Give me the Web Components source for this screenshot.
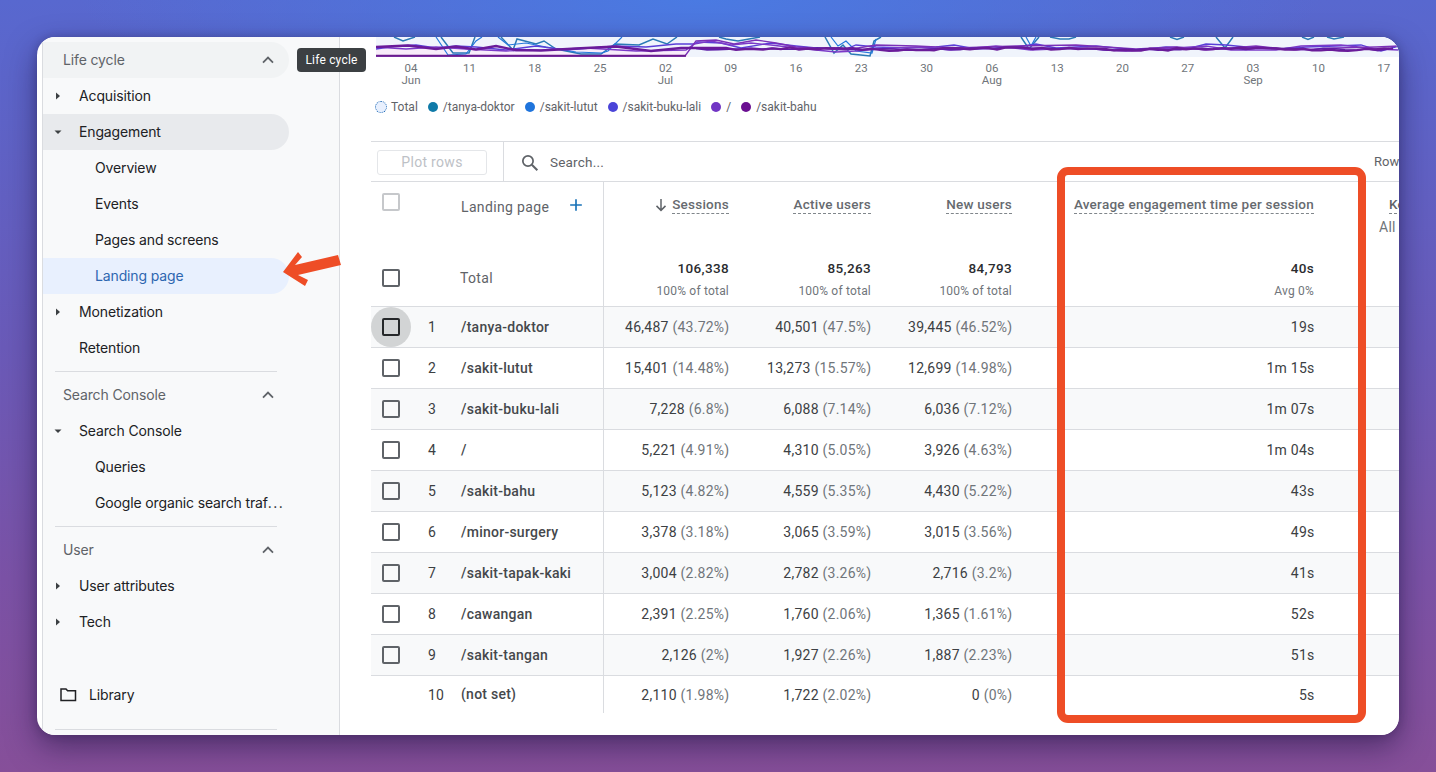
<!DOCTYPE html>
<html><head><meta charset="utf-8">
<style>
html,body{margin:0;height:100%}
body{width:1436px;height:772px;overflow:hidden;background:radial-gradient(ellipse 620px 130px at 700px 0,#4a7ae2 0%,rgba(74,122,226,0) 100%),linear-gradient(180deg,#5868cf 0%,#6a5ab8 45%,#7b52a6 75%,#864f99 100%);font-family:"Inter","Liberation Sans",sans-serif;display:flex;padding:37px;box-sizing:border-box}
</style></head><body>
<ga-window>
 <ga-sidebar slot="side">
  <ga-nav kind="head" label="Life cycle" hov></ga-nav>
  <ga-nav kind="closed" label="Acquisition"></ga-nav>
  <ga-nav kind="open" label="Engagement" sel></ga-nav>
  <ga-nav kind="sub" label="Overview"></ga-nav>
  <ga-nav kind="sub" label="Events"></ga-nav>
  <ga-nav kind="sub" label="Pages and screens"></ga-nav>
  <ga-nav kind="sub" label="Landing page" act></ga-nav>
  <ga-nav kind="closed" label="Monetization"></ga-nav>
  <ga-nav kind="plain" label="Retention"></ga-nav>
  <ga-sep></ga-sep>
  <ga-nav kind="head" label="Search Console"></ga-nav>
  <ga-nav kind="open" label="Search Console"></ga-nav>
  <ga-nav kind="sub" label="Queries"></ga-nav>
  <ga-nav kind="sub" label="Google organic search traf..." wide></ga-nav>
  <ga-sep></ga-sep>
  <ga-nav kind="head" label="User"></ga-nav>
  <ga-nav kind="closed" label="User attributes"></ga-nav>
  <ga-nav kind="closed" label="Tech"></ga-nav>
  <ga-nav kind="lib" label="Library"></ga-nav>
  <ga-sep last></ga-sep>
 </ga-sidebar>
 <ga-main slot="main">
  <ga-chart></ga-chart>
  <ga-legend></ga-legend>
  <ga-toolbar></ga-toolbar>
  <ga-table></ga-table>
 </ga-main>
 <ga-overlay slot="over"></ga-overlay>
</ga-window>
<script>
const ICON={
 up:'<svg width="24" height="24" viewBox="0 0 24 24"><path d="M7 14.6 12 9.6l5 5" fill="none" stroke="#5f6368" stroke-width="1.8"/></svg>',
 right:'<svg width="24" height="24" viewBox="0 0 24 24"><path d="M10 8.5v7l4-3.500z" fill="#3c4043"/></svg>',
 down:'<svg width="24" height="24" viewBox="0 0 24 24"><path d="M8.5 10.5h7L12 14z" fill="#3c4043"/></svg>',
 folder:'<svg width="20" height="20" viewBox="0 0 20 20"><path d="M3 4h5l1.600 1.800H17.500v9.700H3z" fill="none" stroke="#202124" stroke-width="1.500"/></svg>'
};
customElements.define('ga-window',class extends HTMLElement{constructor(){super();this.attachShadow({mode:'open'}).innerHTML=`<style>
:host{display:flex;position:relative;width:1362px;height:698px;border-radius:18px;background:#fff;box-shadow:0 12px 30px rgba(25,15,60,.5),0 0 8px rgba(25,15,60,.25);overflow:hidden;flex:none}
.clip{display:flex;width:100%;height:100%;overflow:hidden;border-radius:18px}
</style><div class="clip"><slot name="side"></slot><slot name="main"></slot><slot name="over"></slot></div>`}});
customElements.define('ga-sidebar',class extends HTMLElement{constructor(){super();this.attachShadow({mode:'open'}).innerHTML=`<style>
:host{display:block;flex:none;width:298px;height:698px;margin-left:5px;padding-top:5px;box-sizing:border-box;background:#f8f9fa;border-left:1px solid #dadce0;border-right:1px solid #dadce0;overflow:hidden}
</style><slot></slot>`}});
customElements.define('ga-nav',class extends HTMLElement{constructor(){super();
 const k=this.getAttribute('kind');let l=this.getAttribute('label');
 if(this.hasAttribute('wide'))l=l.replace('...','<span style="letter-spacing:1.4px">...</span>');
 const bg=this.hasAttribute('sel')?'#e8eaed':this.hasAttribute('act')?'#e8f0fe':this.hasAttribute('hov')?'#f1f3f4':'transparent';
 const col=k=='head'?'#5f6368':this.hasAttribute('act')?'#2d66b0':'#202124';
 const pad={head:20,closed:36,open:36,plain:36,sub:52,lib:46}[k];
 const ic=(k=='closed'?ICON.right:k=='open'?ICON.down:'');
 this.attachShadow({mode:'open'}).innerHTML=`<style>
 :host{display:block;height:36px;width:246px;position:relative;box-sizing:border-box;border-radius:0 18px 18px 0;background:${bg};${k=='lib'?'margin-top:37px;margin-bottom:16px;':''}}
 .t{position:relative;display:block;padding-left:${pad}px;font:400 14px/36px "Inter","Liberation Sans",sans-serif;letter-spacing:-.01em;color:${col};white-space:nowrap}
 .i{position:absolute;left:3px;top:6px;line-height:0}
 .c{position:absolute;left:213px;top:6px;line-height:0}
 .f{position:absolute;left:15px;top:8px;line-height:0}
 </style>${ic?`<span class="i">${ic}</span>`:''}${k=='head'?`<span class="c">${ICON.up}</span>`:''}${k=='lib'?`<span class="f">${ICON.folder}</span>`:''}<span class="t">${l}</span>`}});
customElements.define('ga-sep',class extends HTMLElement{constructor(){super();const last=this.hasAttribute('last');this.attachShadow({mode:'open'}).innerHTML=`<style>
:host{display:block;height:1px;width:222px;margin:${last?'0':'5px'} 0 5px 12px;background:#dadce0}
</style>`}});
customElements.define('ga-main',class extends HTMLElement{constructor(){super();this.attachShadow({mode:'open'}).innerHTML=`<style>
:host{display:block;flex:1;min-width:0;position:relative;font-family:Roboto,"Liberation Sans",sans-serif;overflow:hidden;background:#fff;padding-left:31px}
</style><slot></slot>`}});
function wob(seed,base,amp,step,from,to){let s=seed,p=[];for(let x=from;x<=to;x+=step){s=(s*9301+49297)%233280;p.push(x+','+(base+(s/233280-.5)*amp+Math.sin(x/37)*amp*.25).toFixed(1))}return p.join(' ')}
customElements.define('ga-chart',class extends HTMLElement{constructor(){super();
 const ticks=[['04','Jun',35],['11',0,93.5],['18',0,158.8],['25',0,224.1],['02','Jul',289.400],['09',0,354.700],['16',0,420],['23',0,485.300],['30',0,550.600],['06','Aug',615.900],['13',0,681.200],['20',0,746.500],['27',0,811.800],['03','Sep',877.100],['10',0,942.400],['17',0,1007.700]];
 const B=[
 "18,0 27,4 39,0","65,0 77,16 93,16 99,0",
 "125,0 137,13 141,2 160,7 168,4 180,12 205,17 225,17 239,7 263,8 277,2 291,7 301,0",
 "343,0 350,2 362,4 384,0","449,0 458,16 467,8 475,17 494,19 498,4 505,0",
 "645,0 653,12 663,0","674,0 684,2 693,2 700,0","794,0 801,2.500 808,0","840,0 849,11 857,0","926,0 932,2.500 938,0","951,0 958,2 968,0"];
 const B2=["60,0 72,18 90,17 100,4 106,0","122,0 132,8 150,6 170,10 200,15 226,16 232,14 246,0","455,0 462,9 470,4 480,14 496,16 500,2","650,0 655,9 660,0"];
 const L1="0,12 20,9 40,8 60,11 80,9 100,10 130,13 160,9 190,13 240,9 270,10 300,7 318,7 322,5 345,6 365,11 395,6 420,9 440,11 470,12 480,8 500,10 530,11 560,10 578,8 600,12 640,10 660,7 680,11 720,9 760,13 790,10 815,11 830,7 850,8 880,11 905,12 930,10 960,9 985,8 1005,14 1023,9";
 const L2="0,10 30,12 60,10 90,12 130,14 170,13 210,11 260,14 310,13 318,7 335,4 355,8 375,6 395,8 420,11 460,15 480,14 500,12 540,10 575,13 620,9 655,13 700,11 750,14 800,11 830,9 855,13 900,13 925,9 965,8 1000,12 1023,13";
 const L3="0,19 309,19 320,4 340,3 358,7 380,3 400,6 420,10 470,13 500,8 540,9 580,11 640,9 700,8 760,12 800,10 830,13 880,9 920,13 960,11 1000,10 1023,9";
 this.attachShadow({mode:'open'}).innerHTML=`<style>
 :host{display:block;width:1023px;margin-left:5px;height:63px;position:relative}
 svg{display:block}
 .x{display:block;position:relative;height:32px;font:11.5px/12px Roboto,"Liberation Sans",sans-serif;color:#70757a}
 .x span{position:absolute;top:5px;transform:translateX(-50%);text-align:center;line-height:12px}
 </style><svg width="1023" height="20" viewBox="0 0 1023 20">
 <rect width="1023" height="20" fill="#f0f4fc"/><rect y="12" width="312" height="8" fill="#f8ecfa"/>
 ${B.map(p=>`<polyline points="${p}" fill="none" stroke="#2a7ab5" stroke-width="1.500"/>`).join('')}
 ${B2.map(p=>`<polyline points="${p}" fill="none" stroke="#2478dc" stroke-width="1.200"/>`).join('')}
 <polyline points="${L1}" fill="none" stroke="#5a3fd8" stroke-width="1.300"/>
 <polyline points="${L2}" fill="none" stroke="#7b3ac8" stroke-width="1.300"/>
 <polyline points="${L3}" fill="none" stroke="#7a30b8" stroke-width="1.300"/>
 <polyline points="0,18.700 310,18.700" fill="none" stroke="#6a1b8f" stroke-width="2"/>
 <polyline points="${wob(97,12,2.200,11,320,1023)}" fill="none" stroke="#5e1fa8" stroke-width="1.600"/>
 <polyline points="0,10 32,8.500 60,12 80,9.500 100,12.500 120,9 140,13 165,13.500 200,11.500 240,9.500 275,14 305,11 350,11 ${wob(43,12,2.600,9,360,1023)}" fill="none" stroke="#6a1b9a" stroke-width="2.300"/>
 </svg><div class="x">${ticks.map(t=>`<span style="left:${t[2]}px">${t[0]}${t[1]?'<br>'+t[1]:''}</span>`).join('')}</div>`}});
customElements.define('ga-legend',class extends HTMLElement{constructor(){super();
 const it=[['#0f7aa8','/tanya-doktor'],['#1f74dc','/sakit-lutut'],['#4a44d8','/sakit-buku-lali'],['#7135c4','/'],['#6a0f91','/sakit-bahu']];
 this.attachShadow({mode:'open'}).innerHTML=`<style>
 :host{display:flex;align-items:center;height:14px;margin:0 0 0 4px;font:12px/14px Roboto,"Liberation Sans",sans-serif;color:#5f6368}
 i{display:block;width:10px;height:10px;border-radius:50%;margin-right:5px;flex:none}
 i.t{box-sizing:border-box;width:12px;height:12px;background:#e8f0fe;border:1.200px dotted #1967b4;margin-right:4px}
 span{margin-right:10px}
 </style><i class="t"></i><span>Total</span>${it.map(a=>`<i style="background:${a[0]}"></i><span>${a[1]}</span>`).join('')}`}});
customElements.define('ga-toolbar',class extends HTMLElement{constructor(){super();
 this.attachShadow({mode:'open'}).innerHTML=`<style>
 :host{display:flex;align-items:center;height:39px;margin-top:27px;border-top:1px solid #dadce0;border-bottom:1px solid #dadce0;font:14px/39px Roboto,"Liberation Sans",sans-serif;color:#5f6368;width:1028px;white-space:nowrap}
 .b{padding:0 6px;display:flex;height:39px;align-items:center;border-right:1px solid #dadce0;width:120px;flex:none}
 .p{box-sizing:border-box;width:110px;height:25px;margin-top:2px;border:1px solid #e4e6e9;border-radius:3px;color:#bdc1c6;text-align:center;font-size:14px;line-height:23px;letter-spacing:.3px}
 svg{margin:2px 9px 0 15px;flex:none}
 .s{letter-spacing:.2px;font-size:13.500px;margin-top:1px}
 .r{margin-left:auto;font-size:13px;width:25px;overflow:visible}
 </style><div class="b"><div class="p">Plot rows</div></div>
 <svg width="22" height="22" viewBox="0 0 24 24"><circle cx="9.800" cy="9.800" r="5.600" fill="none" stroke="#5f6368" stroke-width="1.900"/><path d="M14 14l6 6" stroke="#5f6368" stroke-width="2.200" fill="none"/></svg>
 <span class="s">Search...</span><span class="r">Rows</span>`}});
customElements.define('ga-row',class extends HTMLElement{connectedCallback(){
 const d=JSON.parse(this.getAttribute('d'));
 const n=d.n;
 const cell=c=>{const m=c.match(/^(.*?)( \(.*\))?$/);return `<div class="m">${m[1]}${m[2]?`<span class="g">${m[2]}</span>`:''}</div>`};
 (this.shadowRoot||this.attachShadow({mode:'open'})).innerHTML=`<style>
 :host{display:grid;grid-template-columns:40px 40px 153px 137px 142px 141px 302px 73px;height:${n==10?37:41}px;align-items:center;background:${n%2?'#f8f9fa':'#fff'};${n==10?'':'border-bottom:1px solid #dadce0;'}box-sizing:border-box;font:14px/20px Roboto,"Liberation Sans",sans-serif;color:#3c4043;letter-spacing:.25px}
 .cb{box-sizing:border-box;width:18px;height:18px;border:2px solid #5f6368;border-radius:2px;margin-left:11px;position:relative;${n==1?'border-color:#202124;':''}}
 .cb.h::before{content:"";position:absolute;left:-13px;top:-13px;width:40px;height:40px;border-radius:50%;background:rgba(60,64,67,.2)}
 .n{padding-left:17px}
 .na{padding-left:10px;font-weight:500;height:100%;line-height:${n==10?37:40}px;border-right:1px solid #dadce0;box-sizing:border-box;white-space:nowrap;color:#45484c}
 .m{text-align:right;padding-right:11.500px;white-space:nowrap}
 .g{color:#70757a}
 </style><div>${n==10?'':`<div class="cb ${n==1?'h':''}"></div>`}</div><div class="n">${n}</div><div class="na">${d.p}</div>${d.c.map(cell).join('')}`}});
customElements.define('ga-table',class extends HTMLElement{constructor(){super();
 const rows=[
 ['/tanya-doktor','46,487 (43.72%)','40,501 (47.5%)','39,445 (46.52%)','19s'],
 ['/sakit-lutut','15,401 (14.48%)','13,273 (15.57%)','12,699 (14.98%)','1m 15s'],
 ['/sakit-buku-lali','7,228 (6.8%)','6,088 (7.14%)','6,036 (7.12%)','1m 07s'],
 ['/','5,221 (4.91%)','4,310 (5.05%)','3,926 (4.63%)','1m 04s'],
 ['/sakit-bahu','5,123 (4.82%)','4,559 (5.35%)','4,430 (5.22%)','43s'],
 ['/minor-surgery','3,378 (3.18%)','3,065 (3.59%)','3,015 (3.56%)','49s'],
 ['/sakit-tapak-kaki','3,004 (2.82%)','2,782 (3.26%)','2,716 (3.2%)','41s'],
 ['/cawangan','2,391 (2.25%)','1,760 (2.06%)','1,365 (1.61%)','52s'],
 ['/sakit-tangan','2,126 (2%)','1,927 (2.26%)','1,887 (2.23%)','51s'],
 ['(not set)','2,110 (1.98%)','1,722 (2.02%)','0 (0%)','5s']];
 const H=(t,ar)=>`<div class="h">${ar?'<svg width="18" height="18" viewBox="0 0 24 24"><path d="M12 4v15M6 13.200l6 6 6-6" fill="none" stroke="#5f6368" stroke-width="2"/></svg>':''}<u>${t}</u></div>`;
 const T=(a,b)=>`<div class="t"><b>${a}</b><small>${b}</small></div>`;
 this.attachShadow({mode:'open'}).innerHTML=`<style>
 :host{display:block;width:1028px;font:14px/20px Roboto,"Liberation Sans",sans-serif;color:#3c4043;letter-spacing:.25px}
 .head{display:grid;grid-template-columns:233px 137px 142px 141px 302px 73px;height:125px;border-bottom:1px solid #dadce0;box-sizing:border-box}
 .d{position:relative;border-right:1px solid #dadce0;box-sizing:border-box}
 .d .cb{position:absolute;left:11px;box-sizing:border-box;width:18px;height:18px;border:2px solid #5f6368;border-radius:2px}
 .d .cb.a{top:11px;border-color:#c6c8cb}
 .d .cb.b{top:87px}
 .d .l1{position:absolute;left:90px;top:15px;color:#5f6368;white-space:nowrap;letter-spacing:.35px}
 .d .l1 svg{position:absolute;left:105px;top:-2px}
 .d .l2{position:absolute;left:89px;top:86px;color:#5f6368;letter-spacing:.35px}
 .col{position:relative;text-align:right;padding-right:12px}
 .h{position:absolute;right:12px;top:13px;display:flex;align-items:center;gap:2px;white-space:nowrap;color:#666a6f;font-weight:500;font-size:13.500px}
 u{text-decoration:none;border-bottom:1px dashed #80868b;line-height:18px;display:block}
 .t{position:absolute;right:12px;top:76px;text-align:right}
 b{display:block;font-weight:500;color:#2a2c2f;font-size:13.500px;line-height:20px;letter-spacing:.35px}
 small{display:block;font-size:12px;line-height:16px;margin-top:5px;color:#70757a;letter-spacing:.2px}
 .k{position:absolute;left:63px;top:13px;color:#5f6368;white-space:nowrap;font-weight:500;font-size:13.500px}
 .k2{position:absolute;left:53px;top:35px;color:#70757a;white-space:nowrap}
 </style><div class="head">
 <div class="d"><div class="cb a"></div><div class="l1">Landing page<svg width="20" height="20" viewBox="0 0 24 24"><path d="M12 5v14M5 12h14" stroke="#1a73b8" stroke-width="2" fill="none"/></svg></div><div class="cb b"></div><div class="l2">Total</div></div>
 <div class="col">${H('Sessions',1)}${T('106,338','100% of total')}</div>
 <div class="col">${H('Active users')}${T('85,263','100% of total')}</div>
 <div class="col">${H('New users')}${T('84,793','100% of total')}</div>
 <div class="col">${H('Average engagement time per session')}${T('40s','Avg 0%')}</div>
 <div class="col"><div class="k"><u>Key events</u></div><div class="k2">All events</div></div>
 </div><div id="b"></div>`;
 const b=this.shadowRoot.getElementById('b');
 rows.forEach((r,i)=>{const e=document.createElement('ga-row');e.setAttribute('d',JSON.stringify({n:i+1,p:r[0],c:r.slice(1)}));b.appendChild(e)});
}});
customElements.define('ga-overlay',class extends HTMLElement{constructor(){super();
 this.attachShadow({mode:'open'}).innerHTML=`<style>
 :host{display:block;position:absolute;inset:0;pointer-events:none}
 .tip{position:absolute;left:260px;top:11px;width:69px;height:24px;border-radius:4px;background:#3c4043;color:#fff;font:12px/24px Roboto,"Liberation Sans",sans-serif;text-align:center;letter-spacing:.2px}
 .box{position:absolute;left:1020px;top:130px;width:309px;height:556px;box-sizing:border-box;border:8px solid #ee4d26;border-radius:11px}
 svg{position:absolute;left:244px;top:214px}
 </style><div class="tip">Life cycle</div><div class="box"></div>
 <svg width="62" height="38" viewBox="0 0 62 38"><path d="M2 21 17 1 21 6 14 14 57 4 60 14 17 24 27 29 24 35z" fill="#ee4d26"/></svg>`}});
</script>
</body></html>
